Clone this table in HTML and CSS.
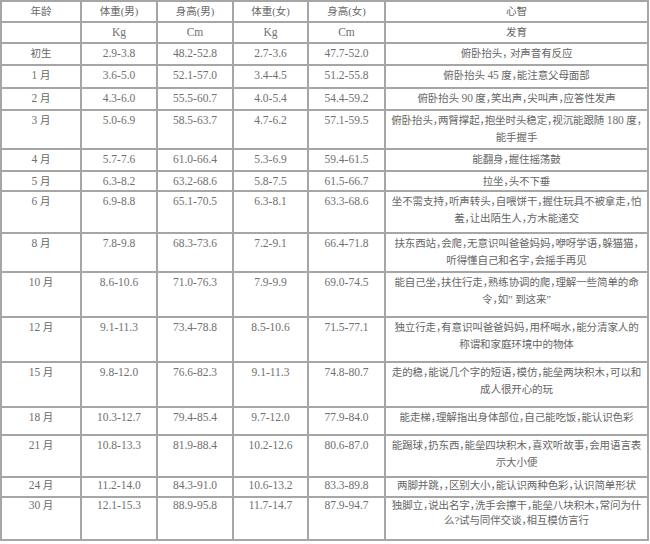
FILE: index.html
```html
<!DOCTYPE html>
<html lang="zh-CN">
<head>
<meta charset="utf-8">
<title>婴幼儿生长发育表</title>
<link rel="stylesheet" href="styles.css">
</head>
<body>
<table class="growth">
  <colgroup>
    <col class="c-age">
    <col class="c-w1">
    <col class="c-h1">
    <col class="c-w2">
    <col class="c-h2">
    <col class="c-dev">
  </colgroup>
  <tbody>
    <tr class="h21"><td>年龄</td><td>体重(男)</td><td>身高(男)</td><td>体重(女)</td><td>身高(女)</td><td class="dev">心智</td></tr>
    <tr class="h21"><td></td><td class="num">Kg</td><td class="num">Cm</td><td class="num">Kg</td><td class="num">Cm</td><td class="dev">发育</td></tr>
    <tr class="h22"><td>初生</td><td class="num">2.9-3.8</td><td class="num">48.2-52.8</td><td class="num">2.7-3.6</td><td class="num">47.7-52.0</td><td class="dev">俯卧抬头，&nbsp;对声音有反应</td></tr>
    <tr class="h23"><td><span class="n">1</span> 月</td><td class="num">3.6-5.0</td><td class="num">52.1-57.0</td><td class="num">3.4-4.5</td><td class="num">51.2-55.8</td><td class="dev">俯卧抬头 <span class="n">45</span> 度，能注意父母面部</td></tr>
    <tr class="h22"><td><span class="n">2</span> 月</td><td class="num">4.3-6.0</td><td class="num">55.5-60.7</td><td class="num">4.0-5.4</td><td class="num">54.4-59.2</td><td class="dev">俯卧抬头 <span class="n">90</span> 度，笑出声，尖叫声，应答性发声</td></tr>
    <tr class="h39"><td><span class="n">3</span> 月</td><td class="num">5.0-6.9</td><td class="num">58.5-63.7</td><td class="num">4.7-6.2</td><td class="num">57.1-59.5</td><td class="dev">俯卧抬头，两臂撑起，抱坐时头稳定，视沉能跟随 <span class="n">180</span> 度，<br>能手握手</td></tr>
    <tr class="h22"><td><span class="n">4</span> 月</td><td class="num">5.7-7.6</td><td class="num">61.0-66.4</td><td class="num">5.3-6.9</td><td class="num">59.4-61.5</td><td class="dev">能翻身，握住摇荡鼓</td></tr>
    <tr class="h20"><td><span class="n">5</span> 月</td><td class="num">6.3-8.2</td><td class="num">63.2-68.6</td><td class="num">5.8-7.5</td><td class="num">61.5-66.7</td><td class="dev">拉坐，头不下垂</td></tr>
    <tr class="h42"><td><span class="n">6</span> 月</td><td class="num">6.9-8.8</td><td class="num">65.1-70.5</td><td class="num">6.3-8.1</td><td class="num">63.3-68.6</td><td class="dev">坐不需支持，听声转头，自喂饼干，握住玩具不被拿走，怕<br>羞，让出陌生人，方木能递交</td></tr>
    <tr class="h39"><td><span class="n">8</span> 月</td><td class="num">7.8-9.8</td><td class="num">68.3-73.6</td><td class="num">7.2-9.1</td><td class="num">66.4-71.8</td><td class="dev">扶东西站，会爬，无意识叫爸爸妈妈，咿呀学语，躲猫猫，<br>听得懂自己和名字，会摇手再见</td></tr>
    <tr class="h45"><td><span class="n">10</span> 月</td><td class="num">8.6-10.6</td><td class="num">71.0-76.3</td><td class="num">7.9-9.9</td><td class="num">69.0-74.5</td><td class="dev">能自己坐，扶住行走，熟练协调的爬，理解一些简单的命<br>令，如”&nbsp;到这来”</td></tr>
    <tr class="h45"><td><span class="n">12</span> 月</td><td class="num">9.1-11.3</td><td class="num">73.4-78.8</td><td class="num">8.5-10.6</td><td class="num">71.5-77.1</td><td class="dev">独立行走，有意识叫爸爸妈妈，用杯喝水，能分清家人的<br>称谓和家庭环境中的物体</td></tr>
    <tr class="h45"><td><span class="n">15</span> 月</td><td class="num">9.8-12.0</td><td class="num">76.6-82.3</td><td class="num">9.1-11.3</td><td class="num">74.8-80.7</td><td class="dev">走的稳，能说几个字的短语，模仿，能垒两块积木，可以和<br>成人很开心的玩</td></tr>
    <tr class="h28"><td><span class="n">18</span> 月</td><td class="num">10.3-12.7</td><td class="num">79.4-85.4</td><td class="num">9.7-12.0</td><td class="num">77.9-84.0</td><td class="dev">能走梯，理解指出身体部位，自己能吃饭，能认识色彩</td></tr>
    <tr class="h42"><td><span class="n">21</span> 月</td><td class="num">10.8-13.3</td><td class="num">81.9-88.4</td><td class="num">10.2-12.6</td><td class="num">80.6-87.0</td><td class="dev">能踢球，扔东西，能垒四块积木，喜欢听故事，会用语言表<br>示大小便</td></tr>
    <tr class="h20 up"><td><span class="n">24</span> 月</td><td class="num">11.2-14.0</td><td class="num">84.3-91.0</td><td class="num">10.6-13.2</td><td class="num">83.3-89.8</td><td class="dev">两脚并跳，，区别大小，能认识两种色彩，认识简单形状</td></tr>
    <tr class="h43 up"><td><span class="n">30</span> 月</td><td class="num">12.1-15.3</td><td class="num">88.9-95.8</td><td class="num">11.7-14.7</td><td class="num">87.9-94.7</td><td class="dev">独脚立，说出名字，洗手会擦干，能垒八块积木，常问为什<br>么?试与同伴交谈，相互模仿言行</td></tr>
  </tbody>
</table>
</body>
</html>
```
FILE: styles.css
```css
html, body {
  margin: 0;
  padding: 0;
  background: #ffffff;
}

.growth {
  border-collapse: collapse;
  table-layout: fixed;
  width: 647px;
  font-family: "Liberation Serif", "Noto Sans CJK SC", serif;
  font-size: 10.5px;
  font-feature-settings: "halt" 1;
  color: #666666;
}

.c-age { width: 80px; }
.c-w1 { width: 76px; }
.c-h1 { width: 76px; }
.c-w2 { width: 75px; }
.c-h2 { width: 77px; }
.c-dev { width: 263px; }

.growth td {
  border: 2px solid #a6a6a6;
  padding: 1px 0 0 0;
  vertical-align: top;
  text-align: center;
  line-height: 17px;
  white-space: nowrap;
  overflow: visible;
}

.growth .up td {
  padding-top: 0;
  line-height: 15px;
}

.growth td.num,
.n {
  font-family: "Liberation Serif", serif;
  font-size: 11.5px;
  color: #707070;
}

.growth td.dev {
  letter-spacing: -0.1px;
}

.h20 { height: 20px; }
.h21 { height: 21px; }
.h22 { height: 22px; }
.h23 { height: 23px; }
.h28 { height: 28px; }
.h39 { height: 39px; }
.h42 { height: 42px; }
.h43 { height: 43px; }
.h45 { height: 45px; }
```
